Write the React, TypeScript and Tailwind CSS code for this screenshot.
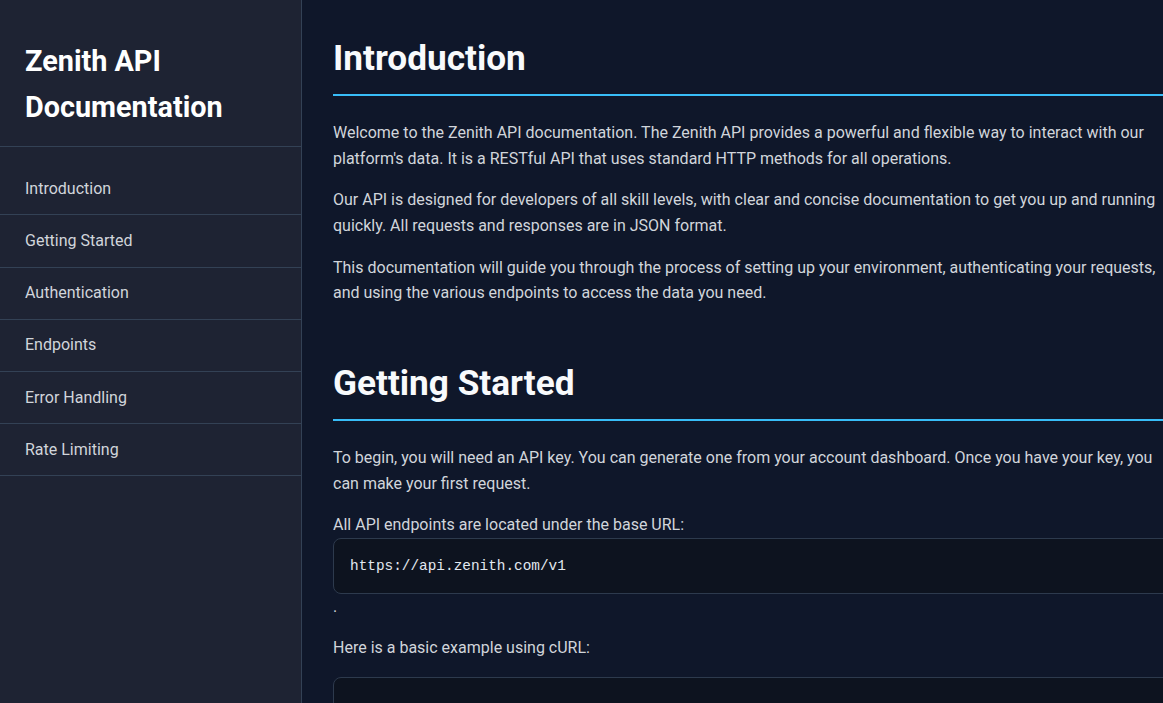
import React from 'react';

const navItems = [
  'Introduction',
  'Getting Started',
  'Authentication',
  'Endpoints',
  'Error Handling',
  'Rate Limiting',
];

function Sidebar() {
  return (
    <aside className="w-[302px] shrink-0 h-screen bg-[#1e2333] border-r border-[#334155]">
      <div className="px-[25px] pt-[38px] pb-4 border-b border-[#334155]">
        <h1 className="text-[28.8px] leading-[1.6] font-bold text-white">
          Zenith API Documentation
        </h1>
      </div>
      <nav className="pt-4">
        <ul>
          {navItems.map((item) => (
            <li
              key={item}
              className="py-[12.8px] px-[25px] leading-[1.6] border-b border-[#334155] text-base text-[#d1d5db]"
            >
              {item}
            </li>
          ))}
        </ul>
      </nav>
    </aside>
  );
}

function SectionTitle({ children }: { children: React.ReactNode }) {
  return (
    <h2 className="text-[35.2px] leading-[1.2] font-bold text-[#f8fafc] pb-[15px] mb-[24px] border-b-2 border-[#38bdf8]">
      {children}
    </h2>
  );
}

function CodeBlock({ children, tall = false }: { children: React.ReactNode; tall?: boolean }) {
  return (
    <div
      className={`bg-[#0d131f] border border-[#2d3a4d] rounded-lg px-4 ${tall ? 'pt-7' : 'pt-4'} pb-4 text-[14.4px] leading-[22px] text-[#e2e8f0] whitespace-pre font-['Liberation_Mono',monospace]`}
    >
      {children}
    </div>
  );
}

export default function App() {
  return (
    <div className="flex h-screen overflow-hidden bg-[#0f172a] font-['Roboto',sans-serif]">
      <Sidebar />
      <main className="flex-1 overflow-hidden pl-[31px] pt-[37px]">
        <div className="w-[840px] text-base leading-[1.6] text-[#d1d5db]">
          <section className="flex flex-col mb-10">
            <SectionTitle>Introduction</SectionTitle>
            <p className="mb-4">
              Welcome to the Zenith API documentation. The Zenith API provides a powerful and flexible way to
              interact with our platform's data. It is a RESTful API that uses standard HTTP methods for all
              operations.
            </p>
            <p className="mb-4">
              Our API is designed for developers of all skill levels, with clear and concise documentation to get
              you up and running quickly. All requests and responses are in JSON format.
            </p>
            <p className="mb-4">
              This documentation will guide you through the process of setting up your environment, authenticating
              your requests, and using the various endpoints to access the data you need.
            </p>
          </section>

          <section className="flex flex-col">
            <SectionTitle>Getting Started</SectionTitle>
            <p className="mb-4">
              To begin, you will need an API key. You can generate one from your account dashboard. Once you have
              your key, you can make your first request.
            </p>
            <div className="mb-4">
              All API endpoints are located under the base URL:
              <CodeBlock>https://api.zenith.com/v1</CodeBlock>.
            </div>
            <p className="mb-4">Here is a basic example using cURL:</p>
            <CodeBlock tall>
              {`curl -X GET "https://api.zenith.com/v1/users" \\
  -H "Authorization: Bearer YOUR_API_KEY"`}
            </CodeBlock>
          </section>
        </div>
      </main>
    </div>
  );
}
